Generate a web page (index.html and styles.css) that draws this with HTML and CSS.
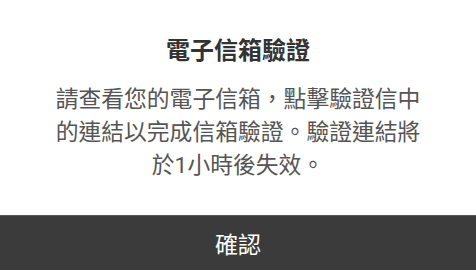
FILE: index.html
```html
<!DOCTYPE html>
<html lang="zh-TW">
<head>
  <meta charset="UTF-8" />
  <meta name="viewport" content="width=device-width, initial-scale=1.0"/>
  <title>電子信箱驗證</title>
  <link rel="stylesheet" href="styles.css">
</head>
<body>

<div class="dialog">
  <div class="content">
    <h1 class="title">電子信箱驗證</h1>
    <p class="message">請查看您的電子信箱，點擊驗證信中的連結以完成信箱驗證。驗證連結將於1小時後失效。</p>
  </div>
  <button class="confirm">確認</button>
</div>

</body>
</html>
```

FILE: styles.css
```css
html, body { margin: 0; height: 100%; background: #fff; }
body { font-family: Roboto, "Noto Sans CJK TC", sans-serif; }
.dialog { display: flex; flex-direction: column; height: 270px; }
.content { flex: 1; display: flex; flex-direction: column; align-items: center; padding-top: 34px; }
.title { margin: 0; font-size: 24px; line-height: 34px; font-weight: bold; color: #333; }
.message { margin: 15px 0 0; width: 370px; font-size: 22.8px; line-height: 33px; color: #555; text-align: center; }
.confirm { height: 55px; border: none; border-top: 1px solid #555; background: #3b3b3b; color: #fff; font-family: inherit; font-size: 23px; padding: 0; }
```
